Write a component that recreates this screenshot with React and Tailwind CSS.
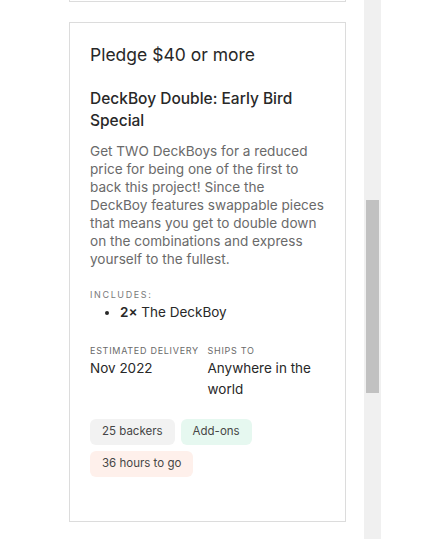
import React from 'react';

const font = { fontFamily: 'Inter, "Noto Sans", sans-serif' };

/* ── Small pill badge ── */
const Badge = ({ className, children }) => (
  <span className={`inline-flex items-center h-[26px] px-3 rounded-md text-[11.5px] text-[#464646] ${className}`}>
    {children}
  </span>
);

export default function App() {
  return (
    <div className="flex h-[539px] w-[442px] bg-white overflow-hidden" style={font}>
      {/* ── Content column ── */}
      <div className="w-[364px] pl-[69px] pr-[18px]">
        {/* bottom edge of the previous reward card */}
        <div className="h-[2px] border-x border-b border-[#dcdcdc]" />

        <div className="mt-[20px] h-[500px] border border-[#dcdcdc] p-5">
          <h2 className="text-[17.5px] leading-[24px] text-[#282828] font-normal">Pledge $40 or more</h2>

          <h3 className="mt-[21px] text-[15.5px] leading-[22px] font-medium text-[#282828]">
            DeckBoy Double: Early Bird Special
          </h3>

          <p className="mt-[10px] text-[13.6px] leading-[18px] text-[#6a6a6a]">
            Get TWO DeckBoys for a reduced price for being one of the first to back this project! Since the
            <br />
            DeckBoy features swappable pieces that means you get to double down on the combinations and express
            yourself to the fullest.
          </p>

          <div className="mt-[20px]">
            <p className="text-[9px] leading-[14px] tracking-[0.18em] uppercase text-[#7a7a7a]">Includes:</p>
            <ul className="list-disc pl-[30px] text-[13.5px] leading-[20px] text-[#282828]">
              <li>
                <span className="font-semibold">2×</span> The DeckBoy
              </li>
            </ul>
          </div>

          <div className="mt-[22px] flex">
            <div className="w-[118px]">
              <p className="text-[9px] leading-[14px] tracking-[0.08em] uppercase text-[#6a6a6a]">
                Estimated delivery
              </p>
              <p className="text-[13.5px] leading-[21px] text-[#282828]">Nov 2022</p>
            </div>
            <div className="w-[118px]">
              <p className="text-[9px] leading-[14px] tracking-[0.08em] uppercase text-[#6a6a6a]">Ships to</p>
              <p className="text-[13.5px] leading-[21px] text-[#282828]">Anywhere in the world</p>
            </div>
          </div>

          <div className="mt-[19px] flex flex-wrap gap-[6px] w-[180px]">
            <Badge className="bg-[#f2f2f2]">25 backers</Badge>
            <Badge className="bg-[#e6f8f0]">Add-ons</Badge>
            <Badge className="bg-[#fef0eb]">36 hours to go</Badge>
          </div>
        </div>
      </div>

      {/* ── Scrollbar ── */}
      <div className="w-[17px] h-full bg-[#f0f0f0] pt-[200px] px-[2px]">
        <div className="h-[193px] bg-[#c1c1c1]" />
      </div>
    </div>
  );
}
